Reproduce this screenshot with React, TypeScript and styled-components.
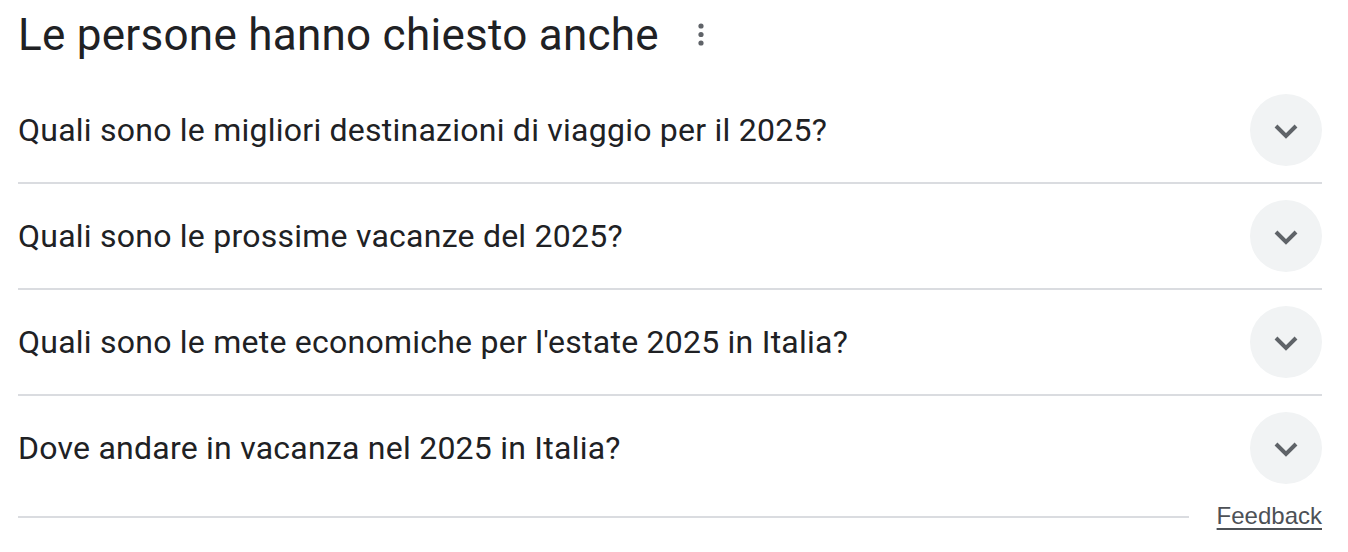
import styled, { createGlobalStyle } from "styled-components";

const questions = [
  "Quali sono le migliori destinazioni di viaggio per il 2025?",
  "Quali sono le prossime vacanze del 2025?",
  "Quali sono le mete economiche per l'estate 2025 in Italia?",
  "Dove andare in vacanza nel 2025 in Italia?",
];

const GlobalStyle = createGlobalStyle`
  body {
    margin: 0;
    background: #fff;
    font-family: Roboto, "Liberation Sans", Arial, sans-serif;
    color: #202124;
  }
`;

export default function App() {
  return (
    <>
      <GlobalStyle />
      <Wrapper>
        <Header>
          <Title>Le persone hanno chiesto anche</Title>
          <MenuButton aria-label="Altre opzioni">
            <svg width="8" height="26" viewBox="0 0 8 26">
              <circle cx="4" cy="4" r="2.6" fill="#5f6368" />
              <circle cx="4" cy="12.5" r="2.6" fill="#5f6368" />
              <circle cx="4" cy="21" r="2.6" fill="#5f6368" />
            </svg>
          </MenuButton>
        </Header>
        <List>
          {questions.map((q) => (
            <Row key={q}>
              <Question>{q}</Question>
              <Toggle aria-label="Espandi">
                <svg width="26" height="16" viewBox="0 0 26 16">
                  <path
                    d="M3 3l10 10L23 3"
                    fill="none"
                    stroke="#5f6368"
                    strokeWidth="4"
                  />
                </svg>
              </Toggle>
            </Row>
          ))}
        </List>
        <Footer>
          <Line />
          <FeedbackLink href="#">Feedback</FeedbackLink>
        </Footer>
      </Wrapper>
    </>
  );
}

const Wrapper = styled.div`
  width: 1304px;
  padding-left: 18px;
`;

const Header = styled.div`
  display: flex;
  align-items: center;
  height: 78px;
  padding-bottom: 8px;
  box-sizing: border-box;
`;

const Title = styled.h2`
  margin: 0;
  font-size: 44px;
  line-height: 52px;
  font-weight: 400;
  letter-spacing: 0.27px;
  color: #202124;
`;

const MenuButton = styled.div`
  display: flex;
  align-items: center;
  justify-content: center;
  margin-left: 38px;
  width: 8px;
  height: 26px;
`;

const List = styled.div`
  display: flex;
  flex-direction: column;
`;

const Row = styled.div`
  display: flex;
  align-items: center;
  justify-content: space-between;
  height: 104px;
  & + & {
    border-top: 2px solid #dadce0;
  }
`;

const Question = styled.div`
  font-size: 32px;
  line-height: 44px;
  letter-spacing: 0.24px;
  color: #202124;
`;

const Toggle = styled.div`
  display: flex;
  align-items: center;
  justify-content: center;
  width: 72px;
  height: 72px;
  border-radius: 50%;
  background: #f1f3f4;
  svg {
    margin-top: 2px;
  }
`;

const Footer = styled.div`
  display: flex;
  align-items: center;
  gap: 28px;
  height: 32px;
`;

const Line = styled.div`
  flex: 1;
  height: 2px;
  background: #dadce0;
  margin-top: 2px;
`;

const FeedbackLink = styled.a`
  font-family: "Liberation Sans", Arial, sans-serif;
  font-size: 24px;
  line-height: 28px;
  color: #4d5156;
  text-decoration: underline;
  text-underline-offset: 4px;
`;
